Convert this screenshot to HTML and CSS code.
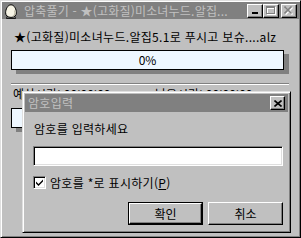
FILE: index.html
```html
<!DOCTYPE html>
<html lang="ko">
<head>
<meta charset="utf-8">
<link rel="stylesheet" href="styles.css">
</head>
<body>
<div class="win">
  <div class="titlebar">
    <svg class="ticon" width="14" height="15" viewBox="0 0 14 15">
      <path d="M3 12.5 L11 12.5 L11.5 14.5 L2.5 14.5 Z" fill="#808080" stroke="#000" stroke-width="0.8"/>
      <path d="M7 0.8 C3.6 0.8 1.6 5.5 1.6 8.8 C1.6 11.6 3.8 13.4 7 13.4 C10.2 13.4 12.4 11.6 12.4 8.8 C12.4 5.5 10.4 0.8 7 0.8 Z" fill="#f6f3e4" stroke="#000" stroke-width="1"/>
      <path d="M10.6 6.5 C11.3 8.5 11.2 11 9 12.2" fill="none" stroke="#b8b4a0" stroke-width="1.2"/>
    </svg>
    <span class="ttext">압축풀기 - ★(고화질)미소녀누드.알집...</span>
    <div class="tbtns">
      <span class="tb"><svg width="8" height="7" viewBox="0 0 8 7"><rect x="1" y="5" width="6" height="2" fill="#000"/></svg></span>
      <span class="tb"><svg width="10" height="9" viewBox="0 0 10 9"><g fill="none" stroke="#fff"><rect x="1.5" y="1.5" width="8" height="7"/><line x1="1" y1="2.5" x2="10" y2="2.5"/></g><g fill="none" stroke="#808080"><rect x="0.5" y="0.5" width="8" height="7"/><line x1="0" y1="1.5" x2="9" y2="1.5"/></g></svg></span>
      <span class="tb tclose"><svg width="10" height="9" viewBox="0 0 10 9"><g stroke="#fff" stroke-width="1.6"><line x1="1.5" y1="1.5" x2="8.5" y2="8.5"/><line x1="8.5" y1="1.5" x2="1.5" y2="8.5"/></g><g stroke="#808080" stroke-width="1.6"><line x1="0.5" y1="0.5" x2="7.5" y2="7.5"/><line x1="7.5" y1="0.5" x2="0.5" y2="7.5"/></g></svg></span>
    </div>
  </div>
  <div class="content">
    <div class="fname">★(고화질)미소녀누드.알집5.1로 푸시고 보슈....alz</div>
    <div class="prog"><span>0%</span></div>
    <div class="sep"></div>
    <div class="times"><span class="t1">예상시간: 00:00:00</span><span class="t2">남은시간: 00:00:00</span></div>
    <div class="prog prog2"></div>
  </div>

  <div class="dlg">
    <div class="dtitle">
      <span class="dttext">암호입력</span>
      <span class="dclose"><svg width="8" height="7" viewBox="0 0 8 7"><g stroke="#000" stroke-width="1.6"><line x1="0.5" y1="0.5" x2="7.5" y2="6.5"/><line x1="7.5" y1="0.5" x2="0.5" y2="6.5"/></g></svg></span>
    </div>
    <div class="dbody">
      <div class="prompt">암호를 입력하세요</div>
      <div class="pwbox"></div>
      <div class="chkrow">
        <span class="chk"><svg width="9" height="9" viewBox="0 0 9 9"><path d="M1 3.5 L3.5 6 L8 1.5 L8 3.5 L3.5 8 L1 5.5 Z" fill="#000"/></svg></span>
        <span class="chklabel">암호를 *로 표시하기(<u>P</u>)</span>
      </div>
      <div class="btns">
        <span class="btn def"><span class="btninner">확인</span></span>
        <span class="btn">취소</span>
      </div>
    </div>
  </div>
</div>
</body>
</html>
```

FILE: styles.css
```css
html, body {
  margin: 0;
  padding: 0;
}
body {
  width: 301px;
  height: 238px;
  overflow: hidden;
  background: #c0c0c0;
  font-family: "Noto Sans CJK KR", "Noto Sans", sans-serif;
  font-size: 12px;
  color: #000;
}
.win {
  position: relative;
  box-sizing: border-box;
  width: 301px;
  height: 238px;
  background: #c0c0c0;
  border: 1px solid;
  border-color: #dfdfdf #000 #000 #dfdfdf;
  box-shadow: inset 1px 1px #fff, inset -1px -1px #808080;
  padding: 1px;
  display: flex;
  flex-direction: column;
}
.titlebar {
  height: 17px;
  background: #808080;
  display: flex;
  align-items: center;
  padding: 0 2px 0 2px;
}
.ticon {
  display: block;
  margin-top: 1px;
}
.ttext {
  margin-left: 6px;
  color: #c0c0c0;
  white-space: nowrap;
  line-height: 17px;
  letter-spacing: 0.2px;
}
.tbtns {
  margin-left: auto;
  display: flex;
  align-items: center;
}
.tb {
  box-sizing: border-box;
  width: 16px;
  height: 14px;
  background: #c0c0c0;
  border: 1px solid;
  border-color: #fff #000 #000 #fff;
  box-shadow: inset -1px -1px #808080;
  display: flex;
  align-items: center;
  justify-content: center;
}
.tb svg {
  display: block;
}
.tclose {
  margin-left: 2px;
}
.content {
  padding: 11px 0 0 9px;
  display: flex;
  flex-direction: column;
}
.fname {
  line-height: 14px;
  padding-left: 3px;
  white-space: nowrap;
  letter-spacing: 0.3px;
}
.prog {
  box-sizing: border-box;
  margin-top: 6px;
  width: 273px;
  height: 20px;
  border: 1px solid #000;
  background: #eef7ff;
  box-shadow: 5px 4px 0 #808080;
  display: flex;
  align-items: center;
  justify-content: center;
  line-height: 18px;
}
.sep {
  margin-top: 13px;
  width: 278px;
  height: 0;
  border-top: 1px solid #808080;
  border-bottom: 1px solid #fff;
}
.times {
  margin-top: 2px;
  line-height: 14px;
  display: flex;
  white-space: nowrap;
}
.t1 {
  padding-left: 2px;
  width: 142px;
}
.prog2 {
  margin-top: 7px;
}
.dlg {
  position: absolute;
  left: 21px;
  top: 90px;
  box-sizing: border-box;
  width: 269px;
  height: 142px;
  background: #c0c0c0;
  border: 1px solid;
  border-color: #dfdfdf #000 #000 #dfdfdf;
  box-shadow: inset 1px 1px #fff, inset -1px -1px #808080;
  padding: 2px;
  display: flex;
  flex-direction: column;
}
.dtitle {
  height: 18px;
  background: #808080;
  display: flex;
  align-items: center;
  padding: 0 3px 0 3px;
}
.dttext {
  color: #c0c0c0;
  line-height: 18px;
  letter-spacing: 0.3px;
}
.dclose {
  margin-left: auto;
  box-sizing: border-box;
  width: 15px;
  height: 14px;
  background: #c0c0c0;
  border: 1px solid;
  border-color: #fff #000 #000 #fff;
  box-shadow: inset -1px -1px #808080;
  display: flex;
  align-items: center;
  justify-content: center;
}
.dclose svg {
  display: block;
}
.dbody {
  padding: 10px 5px 0 8px;
  display: flex;
  flex-direction: column;
}
.prompt {
  line-height: 14px;
  padding-left: 1px;
  letter-spacing: 0.3px;
}
.pwbox {
  box-sizing: border-box;
  margin-top: 10px;
  width: 250px;
  height: 20px;
  background: #fff;
  border: 1px solid;
  border-color: #808080 #fff #fff #808080;
  box-shadow: inset 1px 1px #000, inset -1px -1px #dfdfdf;
}
.chkrow {
  margin-top: 10px;
  display: flex;
  align-items: center;
  height: 13px;
}
.chk {
  box-sizing: border-box;
  width: 13px;
  height: 13px;
  background: #fff;
  border: 1px solid;
  border-color: #808080 #fff #fff #808080;
  box-shadow: inset 1px 1px #000, inset -1px -1px #dfdfdf;
  display: flex;
  align-items: center;
  justify-content: center;
}
.chk svg {
  display: block;
}
.chklabel {
  margin-left: 4px;
  line-height: 14px;
  letter-spacing: 0.3px;
  white-space: nowrap;
}
.btns {
  margin-top: 13px;
  display: flex;
  justify-content: flex-end;
  gap: 5px;
}
.btn {
  box-sizing: border-box;
  width: 75px;
  height: 23px;
  background: #c0c0c0;
  border: 1px solid;
  border-color: #fff #000 #000 #fff;
  box-shadow: inset -1px -1px #808080;
  display: flex;
  align-items: center;
  justify-content: center;
  line-height: 14px;
}
.btn.def {
  border: 1px solid #000;
  box-shadow: none;
  padding: 0;
}
.btninner {
  box-sizing: border-box;
  width: 100%;
  height: 100%;
  border: 1px solid;
  border-color: #fff #000 #000 #fff;
  box-shadow: inset -1px -1px #808080;
  display: flex;
  align-items: center;
  justify-content: center;
}
```
